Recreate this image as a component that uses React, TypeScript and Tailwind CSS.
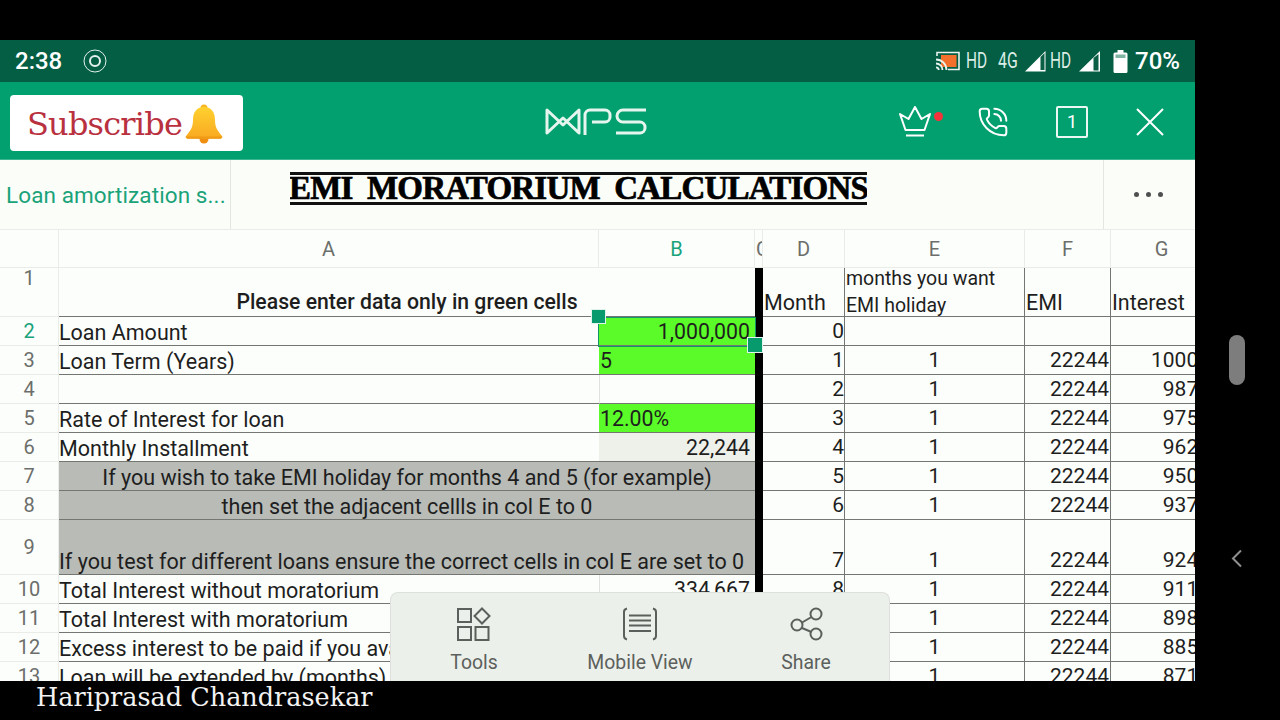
import React from "react";
import { PhoneCall } from "lucide-react";

type R = { n: string; h: string; a?: string; b?: string; bc?: string; d: string; e: string; f: string; g: string };

const rows: R[] = [
  { n: "2", h: "h-[29px]", a: "Loan Amount", b: "1,000,000", bc: "bg-[#5afb28] justify-end", d: "0", e: "", f: "", g: "" },
  { n: "3", h: "h-[29px]", a: "Loan Term (Years)", b: "5", bc: "bg-[#5afb28] justify-start", d: "1", e: "1", f: "22244", g: "10000" },
  { n: "4", h: "h-[29px]", a: "", b: "", bc: "", d: "2", e: "1", f: "22244", g: "9878" },
  { n: "5", h: "h-[29px]", a: "Rate of Interest for loan", b: "12.00%", bc: "bg-[#5afb28] justify-start", d: "3", e: "1", f: "22244", g: "9754" },
  { n: "6", h: "h-[29px]", a: "Monthly Installment", b: "22,244", bc: "bg-[#eef0ea] justify-end", d: "4", e: "1", f: "22244", g: "9629" },
];
const grayRows: (Omit<R, "a"> & { t: string; left?: boolean })[] = [
  { n: "7", h: "h-[29px]", t: "If you wish to take EMI holiday for months 4 and 5 (for example)", d: "5", e: "1", f: "22244", g: "9503" },
  { n: "8", h: "h-[29px]", t: "then set the adjacent cellls in col E to 0", d: "6", e: "1", f: "22244", g: "9375" },
  { n: "9", h: "h-[55px]", t: "If you test for different loans ensure the correct cells in col E are set to 0", left: true, d: "7", e: "1", f: "22244", g: "9247" },
];
const rows2: R[] = [
  { n: "10", h: "h-[29px]", a: "Total Interest without moratorium", b: "334,667", bc: "justify-end", d: "8", e: "1", f: "22244", g: "9117" },
  { n: "11", h: "h-[29px]", a: "Total Interest with moratorium", b: "", bc: "", d: "9", e: "1", f: "22244", g: "8986" },
  { n: "12", h: "h-[29px]", a: "Excess interest to be paid if you avail moratorium", b: "", bc: "", d: "10", e: "1", f: "22244", g: "8853" },
  { n: "13", h: "h-[29px]", a: "Loan will be extended by (months)", b: "", bc: "", d: "11", e: "1", f: "22244", g: "8719" },
];

const line = "border-b border-[#747672]";
const cell = "flex items-end overflow-hidden whitespace-nowrap text-[#1e1e1e] " + line;

function RowHead({ n, h, top }: { n: string; h: string; top?: boolean }) {
  return (
    <div
      className={`w-[59px] ${h} flex ${top ? "items-start" : "items-center"} justify-center border-r border-b border-[#e9ece7] text-[20px] leading-[20px] ${n === "2" ? "text-[#1aa37a]" : "text-[#6c6e6b]"}`}
    >
      {n}
    </div>
  );
}

function RightCols({ r }: { r: { d: string; e: string; f: string; g: string; h: string } }) {
  const num = "text-[21px] leading-[28px]";
  return (
    <>
      <div className={`w-[8px] ${r.h} bg-black shrink-0`} />
      <div className={`${cell} ${r.h} ${num} w-[82px] justify-end border-r`}>{r.d}</div>
      <div className={`${cell} ${r.h} ${num} w-[180px] justify-center border-r`}>{r.e}</div>
      <div className={`${cell} ${r.h} ${num} w-[86px] justify-end pr-[1px] border-r`}>{r.f}</div>
      <div className={`${cell} ${r.h} ${num} w-[99px] justify-end`}>{r.g}</div>
    </>
  );
}

function Row({ r }: { r: R }) {
  return (
    <div className="flex">
      <RowHead n={r.n} h={r.h} />
      <div className={`${cell} ${r.h} text-[21.500px] leading-[24px] w-[540px]`}>{r.a}</div>
      <div className={`${cell} ${r.h} text-[21.300px] leading-[26px] w-[156px] pl-[1px] pr-[5px] ${r.bc ? r.bc : ""} ${r.bc && r.bc.includes("bg-") ? "" : "border-l-[#dfe2dd] border-l"}`}>
        {r.b}
      </div>
      <RightCols r={r} />
    </div>
  );
}

function ColHead({ w, t, c, x }: { w: string; t: string; c?: string; x?: string }) {
  return (
    <div className={`${w} h-[38px] flex items-center pt-[1px] overflow-hidden border-r border-b border-[#e9ece7] text-[20px] ${x ?? "justify-center"} ${c ?? "text-[#6c6e6b]"}`}>
      {t}
    </div>
  );
}

function StatusIcons() {
  return (
    <div className="flex items-center text-white">
      <svg width="26" height="22" viewBox="0 0 26 22" className="mr-[5px]">
        <path d="M2 6V2.500h22v17H13" fill="none" stroke="#e8f3ee" strokeWidth="1.600" />
        <rect x="6" y="5" width="15.500" height="12" fill="#f2702c" />
        <path d="M1 9.500c6 0 10.500 5 10.500 10.500M1 13.500c3.600 0 6.500 3 6.500 6.500M1 17.300c1.600 0 2.700 1.300 2.700 2.700" fill="none" stroke="#e8f3ee" strokeWidth="1.800" />
      </svg>
      <span className="text-[22px] leading-none w-[31px] origin-left scale-x-[.7] text-[#dcece6]">HD</span>
      <span className="text-[22px] leading-none w-[26px] ml-[1px] origin-left scale-x-[.72] text-[#dcece6]">4G</span>
      <svg width="23" height="23" viewBox="0 0 23 23" className="mr-[3px]">
        <path d="M1 21.500 21.500 1v20.500z" fill="#fff" />
        <path d="M16.500 7v13h4V3z" fill="#0a5f45" />
      </svg>
      <span className="text-[22px] leading-none w-[26px] origin-left scale-x-[.7] text-[#dcece6]">HD</span>
      <svg width="23" height="23" viewBox="0 0 23 23" className="ml-[2px] mr-[12px]">
        <path d="M1 21.500 22 1v20.500z" fill="#fff" />
        <path d="M15.500 8v12.500h5V4z" fill="#0a5f45" />
      </svg>
      <svg width="15" height="23" viewBox="0 0 15 23" className="mr-[7px]">
        <path d="M4.500 0h6v2.500H13a1.500 1.500 0 0 1 1.500 1.500v17.500A1.500 1.500 0 0 1 13 23H2a1.500 1.500 0 0 1-1.500-1.500V4A1.500 1.500 0 0 1 2 2.500h2.500z" fill="#fff" />
        <rect x="2.500" y="4.500" width="10" height="3.500" fill="#7fb3a2" />
      </svg>
      <span className="text-[24px] font-medium leading-none">70%</span>
    </div>
  );
}

function Logo() {
  return (
    <svg width="102" height="30" viewBox="0 0 102 30" fill="none" stroke="#e6f6ef" strokeWidth="3">
      <path d="M2 3 18 18 34 3V26L18 11 2 26z" strokeLinejoin="round" />
      <path d="M40 28V8a5 5 0 0 1 5-5h15a5 5 0 0 1 5 5v2a5 5 0 0 1-5 5H47" />
      <path d="M101 3H78a6 6 0 0 0-6 6v0a6 6 0 0 0 6 6h17a5 5 0 0 1 5 5v1a5 5 0 0 1-5 5H71" />
    </svg>
  );
}

function Bell() {
  return (
    <svg width="40" height="42" viewBox="0 0 40 42">
      <defs>
        <linearGradient id="bellg" x1="0" y1="0" x2="0" y2="1">
          <stop offset="0" stopColor="#ffd12f" />
          <stop offset="1" stopColor="#f9a922" />
        </linearGradient>
      </defs>
      <circle cx="20" cy="36" r="4.500" fill="#ef8f12" />
      <circle cx="20" cy="5" r="3.500" fill="#f7b51f" />
      <path d="M20 4c8 0 11 6 11 13 0 8 3 11 7 16 1 1.500 0 2.500-1.500 2.500h-33C2 35.500 1 34.500 2 33c4-5 7-8 7-16C9 10 12 4 20 4z" fill="url(#bellg)" />
      <path d="M2 33.500h36l-1 2.200H3z" fill="#ef9a14" />
    </svg>
  );
}

export default function App() {
  return (
    <div className="w-[1280px] h-[720px] bg-black overflow-hidden flex flex-col font-['Roboto',sans-serif]">
      <div className="h-[40px] shrink-0" />
      <div className="flex h-[641px] shrink-0">
        <div className="relative w-[1195px] h-[641px] overflow-hidden bg-[#fbfdf9] flex flex-col">
          {/* status bar */}
          <div className="h-[42px] shrink-0 bg-[#035e44] flex items-center justify-between pl-[15px] pr-[15px]">
            <div className="flex items-center gap-[21px]">
              <span className="text-white text-[24px] font-medium leading-none">2:38</span>
              <svg width="24" height="24" viewBox="0 0 24 24" fill="none" stroke="#e4f1ec">
                <circle cx="12" cy="12" r="11" strokeWidth="1" />
                <circle cx="12" cy="12" r="5" strokeWidth="2" />
              </svg>
            </div>
            <StatusIcons />
          </div>
          {/* app header */}
          <div className="h-[78px] shrink-0 bg-[#03a06f] border-b border-[#3cb68f] flex items-center pl-[10px] pt-[2px]">
            <div className="w-[233px] h-[56px] mt-[2px] rounded-[4px] bg-white flex items-center pl-[17px] pt-[3px]">
              <span className="w-[157px] font-['DejaVu_Serif',serif] text-[32px] leading-none tracking-[-0.800px] text-[#b9313f]">Subscribe</span>
              <Bell />
            </div>
            <div className="ml-[302px]"><Logo /></div>
            <div className="ml-[251px] relative">
              <svg width="34" height="33" viewBox="0 0 34 33" fill="none" stroke="#fff" strokeWidth="2">
                <path d="M2 9 7.500 25h19L32 9l-8.500 5L17 2l-6.500 12z" strokeLinejoin="round" />
                <path d="M8 30.500h18" />
              </svg>
              <span className="absolute left-[36px] top-[7px] w-[9px] h-[9px] rounded-full bg-[#f5333b]" />
            </div>
            <PhoneCall className="ml-[45px] text-white" size={32} strokeWidth={1.500} />
            <div className="ml-[47px] w-[32px] h-[32px] rounded-[2px] border-2 border-[#eaf7f2] flex items-center justify-center text-white text-[18px] leading-none">1</div>
            <svg width="28" height="28" viewBox="0 0 28 28" className="ml-[48px]" stroke="#fff" strokeWidth="2">
              <path d="M1 1 27 27M27 1 1 27" />
            </svg>
          </div>
          {/* tab bar */}
          <div className="h-[70px] shrink-0 flex items-stretch border-b border-[#e9ece7]">
            <div className="w-[231px] shrink-0 border-r border-[#e3e6e1] flex items-center pl-[6px] pt-[1px] text-[22.500px] tracking-[0.100px] leading-none text-[#1aa37a] whitespace-nowrap">
              Loan amortization s...
            </div>
            <div className="flex-1 flex items-center pl-[59px] pb-[13px]">
              <div className="w-[577px] h-[33px] border-y-[3px] border-[#111] flex items-center justify-center overflow-hidden font-['Liberation_Serif',serif] font-bold text-[33px] leading-none text-black tracking-[-0.800px] [word-spacing:7px] [-webkit-text-stroke:0.700px_black] whitespace-nowrap">
                EMI MORATORIUM CALCULATIONS
              </div>
            </div>
            <div className="w-[92px] shrink-0 border-l border-[#e3e6e1] flex items-center justify-center gap-[7px] pr-[2px]">
              <span className="w-[5px] h-[5px] rounded-full bg-[#4f4f4f]" />
              <span className="w-[5px] h-[5px] rounded-full bg-[#4f4f4f]" />
              <span className="w-[5px] h-[5px] rounded-full bg-[#4f4f4f]" />
            </div>
          </div>
          {/* sheet */}
          <div className="flex-1 overflow-hidden bg-[#fcfefb]">
            <div className="w-[1210px]">
              <div className="flex">
                <ColHead w="w-[59px]" t="" />
                <ColHead w="w-[540px]" t="A" />
                <ColHead w="w-[156px]" t="B" c="text-[#1aa37a]" />
                <ColHead w="w-[8px]" t="C" x="justify-start pl-[1px]" />
                <ColHead w="w-[82px]" t="D" />
                <ColHead w="w-[180px]" t="E" />
                <ColHead w="w-[86px]" t="F" />
                <ColHead w="w-[99px]" t="G" x="justify-center pl-[3px]" />
              </div>
              <div className="flex">
                <RowHead n="1" h="h-[49px]" top />
                <div className={`${cell} h-[49px] text-[21.200px] leading-[28px] w-[696px] justify-center font-medium`}>Please enter data only in green cells</div>
                <div className="w-[8px] h-[49px] bg-black" />
                <div className={`${cell} h-[49px] text-[21.500px] leading-[26px] w-[82px] pl-[1px] border-r`}>Month</div>
                <div className={`${line} h-[49px] w-[180px] pl-[1px] border-r overflow-hidden text-[19.500px] leading-[27px] text-[#1e1e1e]`}>
                  <div className="-mt-[3px]">months you want<br />EMI holiday</div>
                </div>
                <div className={`${cell} h-[49px] text-[21.500px] leading-[26px] w-[86px] pl-[1px] border-r`}>EMI</div>
                <div className={`${cell} h-[49px] text-[21.500px] leading-[26px] w-[99px] pl-[1px]`}>Interest</div>
              </div>
              {rows.map((r) => <Row key={r.n} r={r} />)}
              {grayRows.map((r) => (
                <div className="flex" key={r.n}>
                  <RowHead n={r.n} h={r.h} />
                  <div className={`${cell} ${r.h} text-[21.500px] leading-[24px] w-[696px] bg-[#b8bbb6] ${r.left ? "" : "justify-center"}`}>{r.t}</div>
                  <RightCols r={r} />
                </div>
              ))}
              {rows2.map((r) => <Row key={r.n} r={r} />)}
            </div>
          </div>
          {/* selection */}
          <div className="absolute left-[598px] top-[277px] w-[158px] h-[30px] border border-[#12936c] pointer-events-none" />
          <div className="absolute left-[591px] top-[269px] w-[15px] h-[15px] bg-[#079a6c] border border-[#dff5ec]" />
          <div className="absolute left-[747px] top-[297px] w-[16px] h-[16px] bg-[#079a6c] border border-[#dff5ec]" />
          {/* bottom sheet */}
          <div className="absolute left-[390px] bottom-0 w-[500px] h-[89px] rounded-t-[8px] bg-[#ecf0eb] border border-b-0 border-[#dde0dc] grid grid-cols-3 text-[#5c605c] text-[19.400px] leading-none">
            <div className="flex flex-col items-center pt-[14px] gap-[10px]">
              <svg width="36" height="36" viewBox="0 0 36 36" fill="none" stroke="#5c605c" strokeWidth="2">
                <rect x="2" y="2" width="13" height="13" />
                <path d="M26 1.500 33.500 9 26 16.500 18.500 9z" />
                <rect x="2" y="20" width="13" height="13" />
                <rect x="19.500" y="20" width="13" height="13" />
              </svg>
              <span>Tools</span>
            </div>
            <div className="flex flex-col items-center pt-[14px] gap-[10px]">
              <svg width="36" height="36" viewBox="0 0 36 36" fill="none" stroke="#5c605c" strokeWidth="2">
                <path d="M5 1.500C3 2 2 3 2 5v24c0 2 1 3 3 3.500M31 1.500c2 .5 3 1.500 3 3.500v24c0 2-1 3-3 3.500" />
                <path d="M7 8.500h22M7 13.500h22M7 18.500h22M7 24h22" strokeWidth="1.800" />
              </svg>
              <span>Mobile View</span>
            </div>
            <div className="flex flex-col items-center pt-[14px] gap-[10px]">
              <svg width="36" height="36" viewBox="0 0 36 36" fill="none" stroke="#5c605c" strokeWidth="2" className="translate-x-[1px]">
                <circle cx="8" cy="18" r="5.500" />
                <circle cx="27" cy="7" r="5.500" />
                <circle cx="27" cy="27" r="5.500" />
                <path d="M13 15.500 22.500 10M13 21l9.500 4" />
              </svg>
              <span>Share</span>
            </div>
          </div>
        </div>
        {/* nav strip */}
        <div className="flex-1 flex flex-col items-center">
          <div className="mt-[295px] w-[16px] h-[50px] rounded-full bg-[#7d7d7d] mr-[1px]" />
          <svg width="12" height="19" viewBox="0 0 12 19" className="mt-[164px] mr-[1px]" fill="none" stroke="#8f8f8f" strokeWidth="2">
            <path d="M10 1.500 2 9.500l8 8" />
          </svg>
        </div>
      </div>
      <div className="flex-1 flex items-center pl-[36px] pb-[5px] font-['DejaVu_Serif',serif] text-[25.500px] leading-none text-[#f2f2f2] whitespace-nowrap">
        Hariprasad Chandrasekar
      </div>
    </div>
  );
}
